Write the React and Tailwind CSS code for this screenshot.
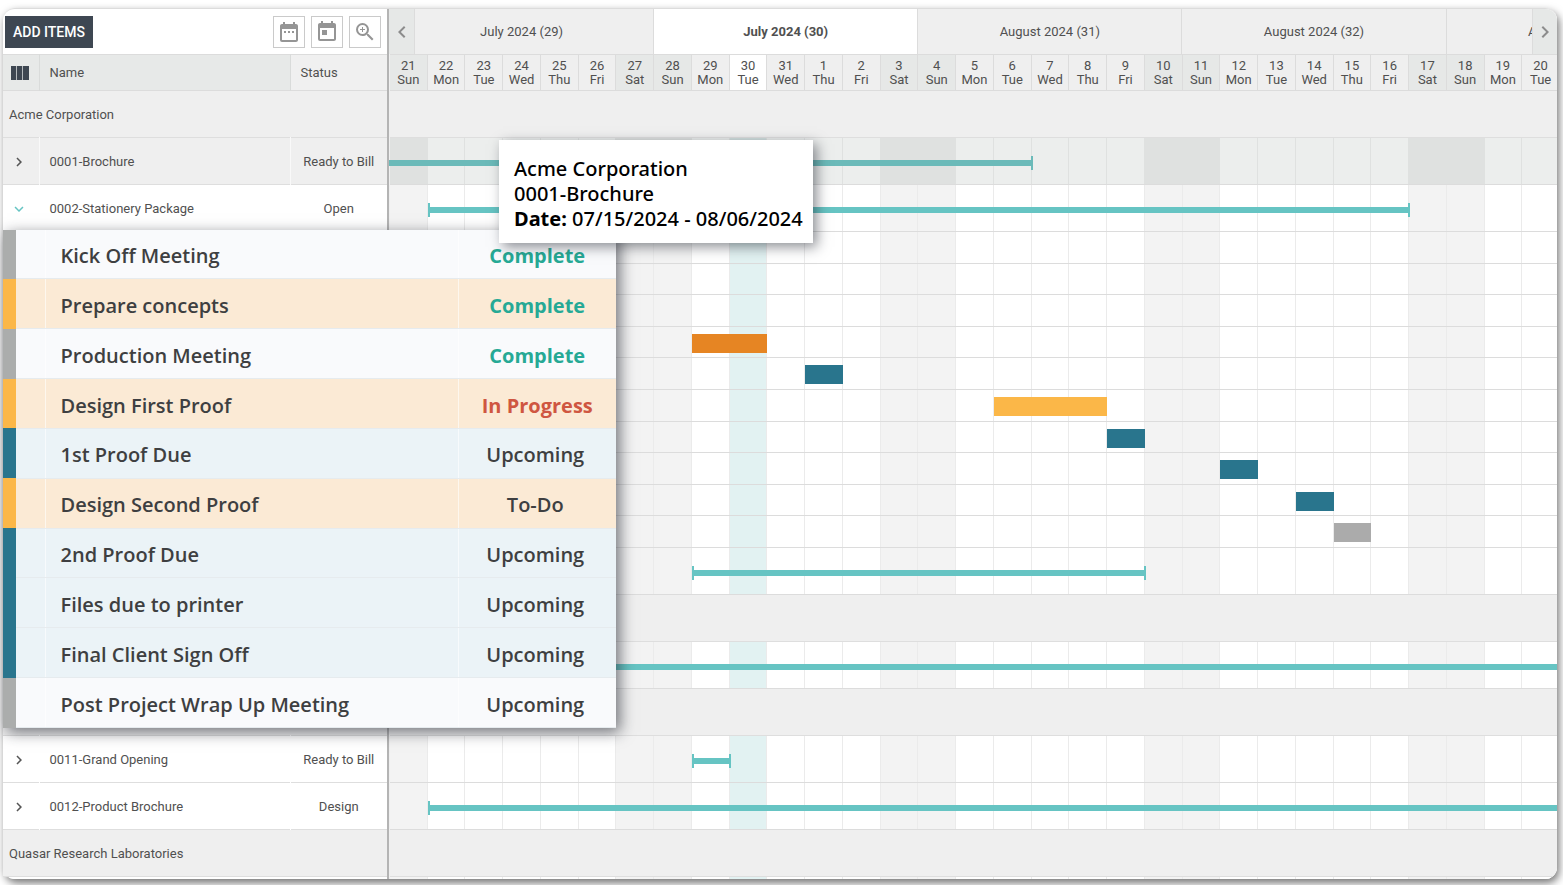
import { MdChevronLeft, MdChevronRight, MdDateRange, MdExpandMore, MdToday, MdZoomIn } from 'react-icons/md';
import clsx from 'clsx';

const weekdays = ['Sun', 'Mon', 'Tue', 'Wed', 'Thu', 'Fri', 'Sat'];

// July 21 (a Sunday) to August 20
const days = Array.from({ length: 31 }, (_, i) => {
  const date = i + 21;
  return {
    num: date > 31 ? date - 31 : date,
    name: weekdays[i % 7],
    weekend: i % 7 === 0 || i % 7 === 6,
    today: i === 9,
  };
});

const weeks = [
  { label: 'July 2024 (29)' },
  { label: 'July 2024 (30)', current: true },
  { label: 'August 2024 (31)' },
  { label: 'August 2024 (32)' },
  { label: 'August 2024 (33)' },
];

const panelTasks = [
  { name: 'Kick Off Meeting', status: 'Complete', kind: 'meeting' },
  { name: 'Prepare concepts', status: 'Complete', kind: 'design' },
  { name: 'Production Meeting', status: 'Complete', kind: 'meeting' },
  { name: 'Design First Proof', status: 'In Progress', kind: 'design' },
  { name: '1st Proof Due', status: 'Upcoming', kind: 'due' },
  { name: 'Design Second Proof', status: 'To-Do', kind: 'design' },
  { name: '2nd Proof Due', status: 'Upcoming', kind: 'due' },
  { name: 'Files due to printer', status: 'Upcoming', kind: 'due' },
  { name: 'Final Client Sign Off', status: 'Upcoming', kind: 'due' },
  { name: 'Post Project Wrap Up Meeting', status: 'Upcoming', kind: 'meeting' },
];

const kindRow = {
  meeting: 'bg-[#f9fafc]',
  design: 'bg-[#fbead5]',
  due: 'bg-[#ebf3f7]',
};

const kindStripe = {
  meeting: 'bg-[#abadac]',
  design: 'bg-[#fbb748]',
  due: 'bg-[#29758d]',
};

const statusText = {
  Complete: 'font-bold text-[#26a995]',
  'In Progress': 'font-bold text-[#cf5641]',
  Upcoming: 'pr-1 font-semibold',
  'To-Do': 'pr-1 font-semibold',
};

// from/to are grid lines: 1 is the left edge of July 21
const taskBars = [
  null,
  null,
  null,
  { from: 9, to: 11, color: 'bg-[#e68523]' },
  { from: 12, to: 13, color: 'bg-[#29758d]' },
  { from: 17, to: 20, color: 'bg-[#fbb748]' },
  { from: 20, to: 21, color: 'bg-[#29758d]' },
  { from: 23, to: 24, color: 'bg-[#29758d]' },
  { from: 25, to: 26, color: 'bg-[#29758d]' },
  { from: 26, to: 27, color: 'bg-[#ababab]' },
];

function DayCells({ hovered }) {
  return days.map((d, i) => (
    <div
      key={i}
      style={{ gridColumn: i + 1 }}
      className={clsx(
        'row-start-1 border-r',
        hovered ? 'border-[#dfe1e0]' : 'border-[#ebebeb]',
        hovered && (d.weekend ? 'bg-[#dfe1e0]' : d.today ? 'bg-[#d2dfde]' : 'bg-[#eceeed]'),
        !hovered && (d.weekend ? 'bg-[#f3f3f3]' : d.today ? 'bg-[#e2f2f2]' : 'bg-white')
      )}
    />
  ));
}

function ProjectRow({ from, to, hovered, openStart, openEnd }) {
  return (
    <div className="grid h-[47px] grid-cols-31 border-b border-[#dcdcdc]">
      <DayCells hovered={hovered} />
      <div
        style={{ gridColumn: `${from} / ${to}` }}
        className={clsx(
          'row-start-1 mt-[18px] flex h-3.5 items-center',
          hovered ? 'border-[#6bbab9]' : 'border-[#66c4c3]',
          openStart ? '-ml-px' : 'border-l-2',
          !openEnd && '-mr-px border-r-2'
        )}
      >
        <div className={clsx('h-1.5 w-full', hovered ? 'bg-[#6bbab9]' : 'bg-[#66c4c3]')} />
      </div>
    </div>
  );
}

function GroupBand() {
  return <div className="h-[47px] border-b border-[#dedede] bg-[#efefef]" />;
}

function JobRow({ name, status, open, hovered }) {
  return (
    <tr className={clsx('h-[47px] border-b border-[#dedede]', hovered ? 'bg-[#efefef]' : 'bg-white')}>
      <td className="border-r border-white/60 pt-0.5">
        <button aria-label={`Toggle ${name}`} className="ml-2 flex size-4 items-center justify-center">
          {open ? (
            <MdExpandMore size={18} className="shrink-0 text-[#66c4c3]" />
          ) : (
            <MdChevronRight size={18} className="shrink-0 text-[#555]" />
          )}
        </button>
      </td>
      <td className="border-r border-white/60 pt-0.5 pl-2.5">{name}</td>
      <td className="pt-0.5 text-center">{status}</td>
    </tr>
  );
}

function GroupRow({ name }) {
  return (
    <tr className="h-[47px] border-b border-[#dedede] bg-[#efefef]">
      <td colSpan={3} className="pt-0.5 pl-1.5">{name}</td>
    </tr>
  );
}

function TaskPanel() {
  return (
    <table className="absolute -top-0.5 left-0 z-10 h-[498px] w-[613px] table-fixed border-collapse font-['Open_Sans',sans-serif] text-xl font-semibold text-[#3e3f41] shadow-[4px_4px_14px_rgba(30,34,44,0.6)]">
      <colgroup>
        <col className="w-[13px]" />
        <col className="w-[29px]" />
        <col />
        <col className="w-[158px]" />
      </colgroup>
      <tbody>
        {panelTasks.map(t => (
          <tr key={t.name} className={kindRow[t.kind]}>
            <td className={kindStripe[t.kind]} />
            <td className="border-r border-b border-white/60 border-b-[#e6ebee]" />
            <td className="border-r border-b border-white/60 border-b-[#e6ebee] pt-1 pl-[15px] leading-6">{t.name}</td>
            <td className={clsx('border-b border-[#e6ebee] pt-1 text-center leading-6', statusText[t.status])}>
              {t.status}
            </td>
          </tr>
        ))}
      </tbody>
    </table>
  );
}

function ToolButton({ label, children }) {
  return (
    <button aria-label={label} className="flex size-8 items-center justify-center border border-[#cacaca] bg-white text-[#959595]">
      {children}
    </button>
  );
}

function ColumnsIcon() {
  return (
    <svg width="18" height="14" viewBox="0 0 18 14">
      <rect width="18" height="14" fill="#3d4651" />
      <path d="M5.5 0v14M11.5 0v14" stroke="#b5babd" />
    </svg>
  );
}

export default function App() {
  return (
    <div className="bg-white px-[3px] pt-2 pb-1.5 font-['Roboto',sans-serif] text-[13px] text-[#505050]">
      <div className="mr-[3px] rounded-xl shadow-[2px_4px_9px_rgba(0,0,0,0.55)]">
        <div className="flex rounded-xl border-t border-[#dcdcdc] bg-white">
          {/* Job list */}
          <div className="relative z-10 w-[386px] shrink-0 border-r-2 border-[#b4b4b4]">
            <div className="flex h-[45px] items-center gap-1.5 pr-1.5 pl-0.5">
              <button className="mr-auto h-8 w-[88px] bg-[#3e4752] text-sm font-medium text-white">ADD ITEMS</button>
              <ToolButton label="Date range"><MdDateRange size={24} /></ToolButton>
              <ToolButton label="Today"><MdToday size={24} /></ToolButton>
              <ToolButton label="Zoom in"><MdZoomIn size={24} /></ToolButton>
            </div>

            <table className="w-full table-fixed border-collapse">
              <colgroup>
                <col className="w-9" />
                <col />
                <col className="w-[97px]" />
              </colgroup>
              <thead>
                <tr className="h-9 border-y border-[#dcdcdc] bg-[#e7e9e8] text-left">
                  <th className="border-r border-[#d9dbda] pl-2"><ColumnsIcon /></th>
                  <th className="border-r border-[#d9dbda] pl-2.5 font-normal">Name</th>
                  <th className="bg-[#f0f0f0] pl-2.5 font-normal">Status</th>
                </tr>
              </thead>
              <tbody>
                <GroupRow name="Acme Corporation" />
                <JobRow name="0001-Brochure" status="Ready to Bill" hovered />
                <JobRow name="0002-Stationery Package" status="Open" open />
                <tr className="h-[504px] border-b border-[#dedede] bg-[#efefef]">
                  <td colSpan={3} className="p-0 align-top">
                    <div className="relative h-[503px]">
                      <TaskPanel />
                    </div>
                  </td>
                </tr>
                <JobRow name="0011-Grand Opening" status="Ready to Bill" />
                <JobRow name="0012-Product Brochure" status="Design" />
                <GroupRow name="Quasar Research Laboratories" />
              </tbody>
            </table>
          </div>

          {/* Timeline */}
          <div className="relative min-w-0 flex-1 overflow-hidden rounded-r-xl bg-[#efefef] pl-px">
            <div className="grid h-[45px] w-[calc(113%+2px)] grid-cols-5">
              {weeks.map(w => (
                <div
                  key={w.label}
                  className={clsx(
                    'flex items-center justify-center border-r border-[#dcdcdc]',
                    w.current ? 'bg-white font-bold' : 'bg-[#efefef]'
                  )}
                >
                  {w.label}
                </div>
              ))}
            </div>

            <div className="w-[calc(100%+3px)]">
              <div className="grid h-[37px] grid-cols-31 border-y border-[#dcdcdc]">
                {days.map((d, i) => (
                  <div
                    key={i}
                    className={clsx(
                      'border-r border-[#dcdcdc] pt-1 text-center leading-[14px]',
                      d.weekend ? 'bg-[#e6e8e7]' : d.today ? 'bg-white' : 'bg-[#efefef]'
                    )}
                  >
                    {d.num}
                    <br />
                    {d.name}
                  </div>
                ))}
              </div>

              <GroupBand />
              <ProjectRow from={1} to={18} hovered openStart />
              <ProjectRow from={2} to={28} />
              <div className="grid h-[316px] grid-rows-10">
                {taskBars.map((bar, i) => (
                  <div key={i} className="grid grid-cols-31 border-b border-[#dcdcdc]">
                    <DayCells />
                    {bar && (
                      <div
                        style={{ gridColumn: `${bar.from} / ${bar.to}` }}
                        className={clsx('row-start-1 mt-[7px] h-[19px]', bar.color)}
                      />
                    )}
                  </div>
                ))}
              </div>
              <ProjectRow from={9} to={21} />
              <GroupBand />
              <ProjectRow from={2} to={32} openEnd />
              <GroupBand />
              <ProjectRow from={9} to={10} />
              <ProjectRow from={2} to={32} openEnd />
              <GroupBand />
              <div className="grid h-0.5 grid-cols-31">
                <DayCells />
              </div>
            </div>

            <button
              aria-label="Previous week"
              className="absolute top-0 left-0 flex h-[45px] w-[26px] items-center justify-center border-r border-[#dcdcdc] bg-[#e6e8e7] text-[#8c8c8c]"
            >
              <MdChevronLeft size={24} />
            </button>
            <button
              aria-label="Next week"
              className="absolute top-0 right-0 flex h-[45px] w-[25px] items-center justify-center border-l border-[#dcdcdc] bg-[#e6e8e7] text-[#8c8c8c]"
            >
              <MdChevronRight size={24} />
            </button>

            <div
              role="tooltip"
              className="absolute top-[131px] left-[110px] z-20 h-[103px] w-[314px] bg-white pt-4 pl-[15px] font-['Noto_Sans',sans-serif] text-xl leading-[25px] font-medium text-black shadow-[4px_4px_12px_rgba(30,34,44,0.5)]"
            >
              <p>Acme Corporation</p>
              <p>0001-Brochure</p>
              <p><b>Date:</b> 07/15/2024 - 08/06/2024</p>
            </div>
          </div>
        </div>
      </div>
    </div>
  );
}
